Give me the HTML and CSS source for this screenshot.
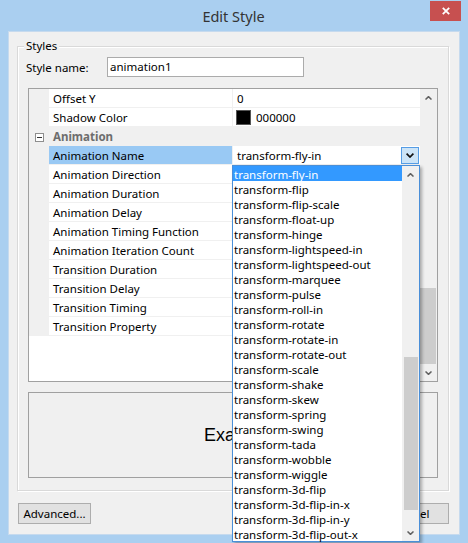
FILE: index.html
```html
<!DOCTYPE html>
<html>
<head>
<meta charset="utf-8">
<title>Edit Style</title>
<link rel="stylesheet" href="styles.css">
</head>
<body>
<div class="window">
  <div class="titlebar">
    <span class="title">Edit Style</span>
    <div class="close"><svg width="8" height="8" viewBox="0 0 8 8"><path d="M0.8 0.8 L7.2 7.2 M7.2 0.8 L0.8 7.2" stroke="#fff" stroke-width="1.8" fill="none"/></svg></div>
  </div>
  <div class="client">
    <fieldset class="group">
      <legend>Styles</legend>
      <div class="name-row">
        <label class="name-label">Style name:</label>
        <div class="input">animation1</div>
      </div>
      <div class="propgrid">
        <div class="rows">
          <div class="row"><div class="gut"></div><div class="name">Offset Y</div><div class="value">0</div></div>
          <div class="row"><div class="gut"></div><div class="name">Shadow Color</div><div class="value"><span class="swatch"></span>000000</div></div>
          <div class="row cat"><div class="gut"><span class="minus"><span class="minus-bar"></span></span></div><div class="name">Animation</div><div class="value"></div></div>
          <div class="row sel"><div class="gut"></div><div class="name">Animation Name</div><div class="value">transform-fly-in<span class="combo-btn"><svg width="8" height="5" viewBox="0 0 8 5"><polyline points="0.6,0.6 4,4 7.4,0.6" fill="none" stroke="#111" stroke-width="1.7"/></svg></span></div></div>
          <div class="row"><div class="gut"></div><div class="name">Animation Direction</div><div class="value"></div></div>
          <div class="row"><div class="gut"></div><div class="name">Animation Duration</div><div class="value"></div></div>
          <div class="row"><div class="gut"></div><div class="name">Animation Delay</div><div class="value"></div></div>
          <div class="row"><div class="gut"></div><div class="name">Animation Timing Function</div><div class="value"></div></div>
          <div class="row"><div class="gut"></div><div class="name">Animation Iteration Count</div><div class="value"></div></div>
          <div class="row"><div class="gut"></div><div class="name">Transition Duration</div><div class="value"></div></div>
          <div class="row"><div class="gut"></div><div class="name">Transition Delay</div><div class="value"></div></div>
          <div class="row"><div class="gut"></div><div class="name">Transition Timing</div><div class="value"></div></div>
          <div class="row"><div class="gut"></div><div class="name">Transition Property</div><div class="value"></div></div>
        </div>
        <div class="vscroll">
          <div class="arrow"><svg width="7" height="4" viewBox="0 0 7 4"><polyline points="0.5,3.5 3.5,0.6 6.5,3.5" fill="none" stroke="#606060" stroke-width="1.5"/></svg></div>
          <div class="track"><div class="thumb"></div></div>
          <div class="arrow"><svg width="7" height="4" viewBox="0 0 7 4"><polyline points="0.5,0.5 3.5,3.4 6.5,0.5" fill="none" stroke="#606060" stroke-width="1.5"/></svg></div>
        </div>
      </div>
      <div class="preview"><span class="preview-text">Example</span></div>
    </fieldset>
    <div class="buttons">
      <button class="btn btn-adv">Advanced...</button>
      <button class="btn btn-ok">OK</button>
      <button class="btn btn-cancel">Cancel</button>
    </div>
  </div>

  <div class="dropdown">
    <div class="items">
      <div class="item sel">transform-fly-in</div>
      <div class="item">transform-flip</div>
      <div class="item">transform-flip-scale</div>
      <div class="item">transform-float-up</div>
      <div class="item">transform-hinge</div>
      <div class="item">transform-lightspeed-in</div>
      <div class="item">transform-lightspeed-out</div>
      <div class="item">transform-marquee</div>
      <div class="item">transform-pulse</div>
      <div class="item">transform-roll-in</div>
      <div class="item">transform-rotate</div>
      <div class="item">transform-rotate-in</div>
      <div class="item">transform-rotate-out</div>
      <div class="item">transform-scale</div>
      <div class="item">transform-shake</div>
      <div class="item">transform-skew</div>
      <div class="item">transform-spring</div>
      <div class="item">transform-swing</div>
      <div class="item">transform-tada</div>
      <div class="item">transform-wobble</div>
      <div class="item">transform-wiggle</div>
      <div class="item">transform-3d-flip</div>
      <div class="item">transform-3d-flip-in-x</div>
      <div class="item">transform-3d-flip-in-y</div>
      <div class="item">transform-3d-flip-out-x</div>
    </div>
    <div class="dscroll">
      <div class="arrow"><svg width="7" height="4" viewBox="0 0 7 4"><polyline points="0.5,3.5 3.5,0.6 6.5,3.5" fill="none" stroke="#606060" stroke-width="1.5"/></svg></div>
      <div class="dtrack"><div class="dthumb"></div></div>
      <div class="arrow"><svg width="7" height="4" viewBox="0 0 7 4"><polyline points="0.5,0.5 3.5,3.4 6.5,0.5" fill="none" stroke="#606060" stroke-width="1.5"/></svg></div>
    </div>
  </div>
</div>
</body>
</html>
```
FILE: styles.css
```css
* { box-sizing: border-box; }

html, body {
  margin: 0;
  padding: 0;
}

body {
  font-family: "Noto Sans", "Open Sans", sans-serif;
  font-size: 11.5px;
  color: #000;
  background: #aacff0;
}

.window {
  width: 468px;
  height: 543px;
  background: #aacff0;
  position: relative;
  overflow: hidden;
}

.titlebar {
  height: 31px;
  display: flex;
  align-items: center;
  justify-content: center;
  position: relative;
}

.title {
  font-size: 14.5px;
  color: #333;
  margin-right: 1px;
}

.close {
  position: absolute;
  left: 430px;
  top: 1px;
  width: 31px;
  height: 20px;
  background: #c75050;
  display: flex;
  align-items: center;
  justify-content: center;
}

.client {
  margin: 0 8px;
  height: 504px;
  background: #f0f0f0;
  border: 1px solid #c6daee;
  padding: 0 10px 0 8px;
}

.group {
  margin: 6px 0 0 0;
  padding: 3px 10px 12px 10px;
  border: 1px solid #d9d9d9;
  box-shadow: inset 1px 1px 0 #fff, 1px 1px 0 #fff;
  min-width: 0;
}

.group legend {
  padding: 0 2px;
  margin-left: -4px;
  line-height: 16px;
  background: #f0f0f0;
}

.name-row {
  display: flex;
  align-items: center;
  height: 20px;
  margin-left: -2px;
}

.name-label {
  width: 81px;
}

.input {
  width: 197px;
  height: 20px;
  border: 1px solid #ababab;
  background: #fff;
  padding-left: 2px;
  line-height: 18px;
}

.propgrid {
  margin-top: 11px;
  height: 294px;
  border: 1px solid #a0a0a0;
  background: #fff;
  display: flex;
}

.rows {
  flex: 1;
  min-width: 0;
}

.row {
  display: flex;
  height: 19px;
  border-bottom: 1px solid #f0f0f0;
}

.gut {
  width: 20px;
  background: #f0f0f0;
  display: flex;
  align-items: flex-start;
}

.name {
  width: 183px;
  padding-left: 4px;
  padding-top: 1px;
  line-height: 18px;
  white-space: nowrap;
}

.value {
  flex: 1;
  border-left: 1px solid #f0f0f0;
  padding-left: 4px;
  padding-top: 1px;
  display: flex;
  align-items: center;
  white-space: nowrap;
}

.row.cat {
  background: #f0f0f0;
}

.row.cat .name {
  font-weight: bold;
  color: #6d6d6d;
}

.row.sel .name {
  background: #99c9f4;
}

.minus {
  width: 9px;
  height: 9px;
  margin: 6px 0 0 6px;
  border: 1px solid #8e8e8e;
  background: #fff;
  display: flex;
  align-items: center;
  justify-content: center;
}

.minus-bar {
  width: 5px;
  height: 1px;
  background: #333;
}

.swatch {
  width: 15px;
  height: 15px;
  background: #000;
  border: 1px solid #555;
  margin-left: -1px;
  margin-right: 5px;
  margin-top: -1px;
}

.combo-btn {
  width: 18px;
  height: 17px;
  margin-left: auto;
  margin-right: 1px;
  margin-top: -1px;
  background: #cce4f7;
  border: 1px solid #569de5;
  display: flex;
  align-items: center;
  justify-content: center;
}

.vscroll, .dscroll {
  width: 17px;
  background: #f0f0f0;
  display: flex;
  flex-direction: column;
}

.arrow {
  height: 17px;
  display: flex;
  align-items: center;
  justify-content: center;
}

.track {
  flex: 1;
  display: flex;
  flex-direction: column;
  justify-content: flex-end;
}

.thumb {
  height: 76px;
  background: #cdcdcd;
  margin: 0 1px 0 0;
}

.preview {
  margin-top: 10px;
  height: 86px;
  border: 1px solid #a0a0a0;
  background: #f0f0f0;
  display: flex;
  align-items: center;
  justify-content: center;
}

.preview-text {
  font-family: "Liberation Sans", Arial, sans-serif;
  font-size: 18px;
  margin-left: 12px;
}

.buttons {
  display: flex;
  margin-top: 12px;
}

.btn {
  font: inherit;
  height: 21px;
  padding: 0;
  background: #e1e1e1;
  border: 1px solid #adadad;
  color: #000;
}

.btn-adv {
  width: 73px;
  margin-left: 1px;
}

.btn-ok {
  width: 75px;
  margin-left: auto;
}

.btn-cancel {
  width: 75px;
  margin-left: 6px;
}

.dropdown {
  position: absolute;
  left: 232px;
  top: 165px;
  width: 188px;
  height: 377px;
  border: 1px solid #4a8fd8;
  background: #fff;
  display: flex;
  box-shadow: 2px 2px 3px rgba(0, 0, 0, 0.3);
}

.items {
  flex: 1;
  min-width: 0;
}

.item {
  height: 15px;
  line-height: 15px;
  padding-top: 1px;
  padding-left: 1px;
  white-space: nowrap;
}

.item.sel {
  background: #3399ff;
  color: #fff;
}

.dtrack {
  flex: 1;
}

.dthumb {
  margin: 174px 1px 0 2px;
  height: 153px;
  background: #cdcdcd;
}
```
